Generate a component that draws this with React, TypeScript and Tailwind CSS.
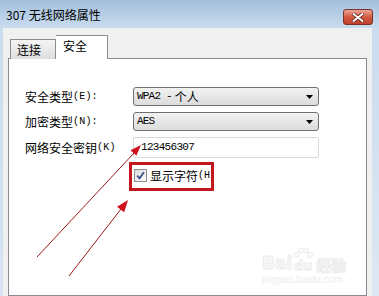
import React from 'react';

const cjk = "font-['Noto_Sans_CJK_SC',sans-serif]";
const mono = "font-['Liberation_Mono','Noto_Sans_CJK_SC',monospace]";

function Select({ children }: { children: React.ReactNode }) {
  return (
    <div className="w-[186px] h-[19px] rounded-[3px] border border-[#707070] bg-gradient-to-b from-[#f2f2f2] to-[#dcdcdc] flex items-center justify-between pl-[3px] pr-[5px]">
      <div className={`${mono} text-[12px] leading-none text-black flex items-center`}>{children}</div>
      <svg width="7" height="4" viewBox="0 0 7 4">
        <path d="M0 0h7L3.5 4z" fill="#000" />
      </svg>
    </div>
  );
}

function Label({ cn, en }: { cn: string; en: string }) {
  return (
    <div className="w-[108px] flex items-center text-black leading-none">
      <span className={`${cjk} text-[12px]`}>{cn}</span>
      <span className={`${mono} text-[10px] tracking-[0.2px]`}>{en}</span>
    </div>
  );
}

export default function App() {
  return (
    <div className="relative w-[379px] h-[296px] overflow-hidden flex flex-col bg-[#f0f0f0]">
      {/* title bar */}
      <div className="h-[28px] shrink-0 bg-gradient-to-b from-[#a3bfdd] to-[#cadcef] flex items-start justify-between pl-[6px] pr-[6px]">
        <span className={`${cjk} text-[12px] leading-none mt-[9px] text-black`}>307 无线网络属性</span>
        <div className="mt-[9px] w-[30px] h-[16px] rounded-[3px] border border-[#7b3328] bg-gradient-to-b from-[#e9a597] via-[#d45a44] to-[#c0402c] flex items-center justify-center">
          <svg width="12" height="9" viewBox="0 0 12 9">
            <path d="M1.5 1l9 7M10.5 1l-9 7" stroke="#5a1a12" strokeWidth="3.4" strokeLinecap="round" />
            <path d="M1.5 1l9 7M10.5 1l-9 7" stroke="#fff" strokeWidth="2" strokeLinecap="round" />
          </svg>
        </div>
      </div>

      {/* body */}
      <div className="flex-1 flex">
        <div className="w-[3px] bg-gradient-to-b from-[#cadcef] to-[#d7e3f0]" />
        <div className="flex-1 flex flex-col pl-[5px] pr-[5px] pt-[7px] bg-[#f0f0f0]">
          {/* tabs */}
          <div className="h-[24px] flex items-end -mb-px relative z-10">
            <div className={`ml-[2px] w-[46px] h-[20px] border border-b-0 border-[#898c95] bg-gradient-to-b from-[#f4f4f4] to-[#dedede] flex items-center pl-[6px] ${cjk} text-[12px] leading-none text-black`}>
              连接
            </div>
            <div className={`w-[52px] h-[24px] border border-b-0 border-l-0 border-[#898c95] bg-white flex items-start pt-[4px] pl-[7px] ${cjk} text-[12px] leading-none text-black`}>
              安全
            </div>
          </div>
          {/* panel */}
          <div className="flex-1 bg-white border border-[#898c95] pt-[28px] pl-[16px] flex flex-col">
            <div className="flex items-center h-[19px]">
              <Label cn="安全类型" en="(E):" />
              <Select>
                <span className="text-[11px] tracking-[-0.8px] mr-[3px]">WPA2 - </span>
                <span className={`${cjk} text-[12px]`}>个人</span>
              </Select>
            </div>
            <div className="flex items-center h-[19px] mt-[6px]">
              <Label cn="加密类型" en="(N):" />
              <Select>
                <span className="text-[11px] tracking-[-0.8px]">AES</span>
              </Select>
            </div>
            <div className="flex items-center h-[21px] mt-[6px]">
              <Label cn="网络安全密钥" en="(K)" />
              <div className="w-[186px] h-[21px] rounded-[2px] border border-[#d9d9d9] bg-white flex items-center pl-[7px]">
                <span className={`${mono} text-[11px] leading-none tracking-[-0.7px] text-black`}>123456307</span>
              </div>
            </div>
            <div className="flex items-center mt-[11px] ml-[109px]">
              <div className="w-[13px] h-[13px] border border-[#8e8f8f] bg-gradient-to-br from-[#dcdcdc] to-[#fbfbfb] flex items-center justify-center">
                <svg width="9" height="9" viewBox="0 0 9 9">
                  <path d="M1.2 4.6L3.6 7.3L7.9 1.2" fill="none" stroke="#3c4f8f" strokeWidth="1.8" />
                </svg>
              </div>
              <span className={`${cjk} text-[12px] leading-none ml-[3px] text-black`}>显示字符</span>
              <span className={`${mono} text-[10px] leading-none text-black`}>(H</span>
            </div>
          </div>
        </div>
        <div className="w-[7px] bg-gradient-to-b from-[#cadcef] to-[#dde8f3]" />
      </div>

      {/* red highlight box */}
      <div className="absolute left-[129px] top-[162px] w-[85px] h-[29px] border-[3px] border-[#c4161c] pointer-events-none" />

      {/* baidu watermark */}
      <div className="absolute left-[262px] top-[242px] pointer-events-none flex flex-col items-start">
        <div className="flex items-end h-[30px]">
          <span className="font-['DejaVu_Sans',sans-serif] font-bold text-[17px] leading-none text-[#fafafa] [-webkit-text-stroke:1px_#ececec]">Bai</span>
          <div className="flex flex-col items-center ml-[1px]">
            <svg width="20" height="12" viewBox="0 0 20 12">
              <circle cx="4" cy="8" r="2.6" fill="#fafafa" stroke="#ececec" />
              <circle cx="8" cy="3.5" r="2.6" fill="#fafafa" stroke="#ececec" />
              <circle cx="13" cy="3.5" r="2.6" fill="#fafafa" stroke="#ececec" />
              <circle cx="17" cy="8" r="2.6" fill="#fafafa" stroke="#ececec" />
            </svg>
            <span className="font-['DejaVu_Sans',sans-serif] font-bold text-[13px] leading-none text-[#fafafa] [-webkit-text-stroke:1px_#ececec]">du</span>
          </div>
          <span className={`${cjk} font-bold text-[15px] leading-none ml-[3px] text-[#fafafa] [-webkit-text-stroke:1px_#ececec]`}>经验</span>
        </div>
        <span className="font-['Liberation_Sans',sans-serif] text-[10px] leading-none mt-[3px] text-[#ededed]">jingyan.baidu.com</span>
      </div>

      {/* arrows */}
      <svg className="absolute left-0 top-0 pointer-events-none" width="379" height="296" viewBox="0 0 379 296">
        <line x1="37" y1="257" x2="134" y2="153" stroke="#9b1b1b" strokeWidth="1" />
        <polygon points="141,145 136.4,155.7 130.6,150.3" fill="#d0101a" />
        <line x1="69" y1="276" x2="121" y2="209" stroke="#9b1b1b" strokeWidth="1" />
        <polygon points="128,200 124.2,212.3 117,206.7" fill="#d0101a" />
      </svg>
    </div>
  );
}
